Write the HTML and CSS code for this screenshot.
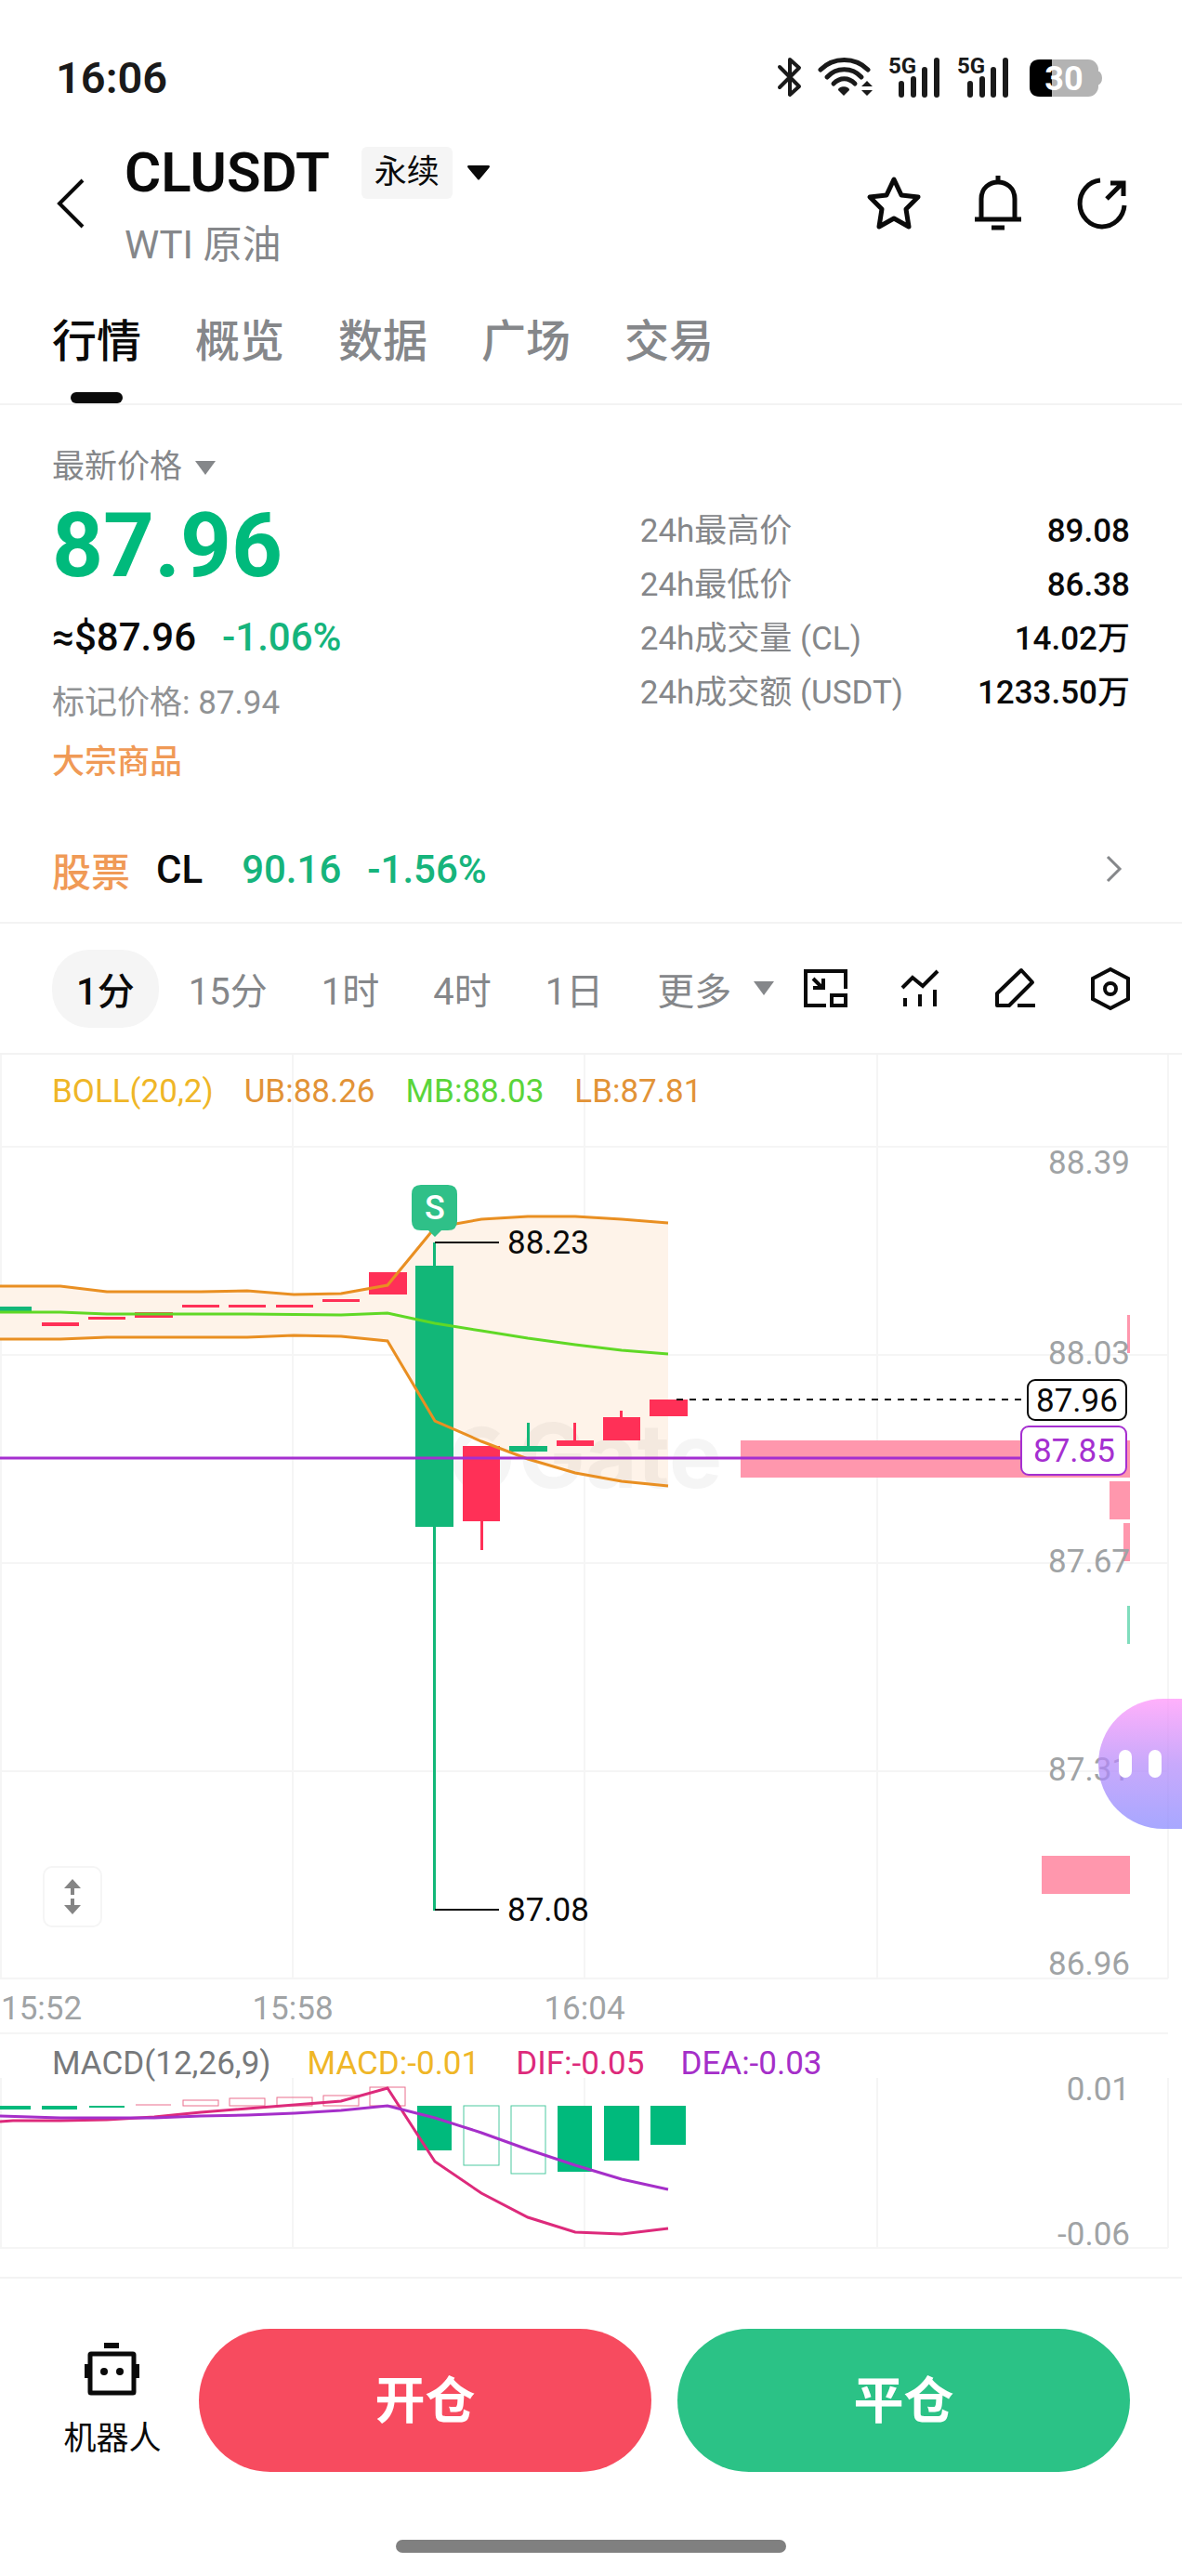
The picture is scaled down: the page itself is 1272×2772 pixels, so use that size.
FILE: index.html
```
<!DOCTYPE html>
<html lang="zh-CN">
<head>
    <meta charset="UTF-8">
    <meta name="viewport" content="width=device-width, initial-scale=1.0">
    <title>CLUSDT 永续</title>
    <link rel="stylesheet" href="styles.css">
</head>
<body>
    <!-- status bar -->
    <div class="status">
        <span class="clock">16:06</span>
        <div class="status-icons">
            <svg width="28" height="44" viewBox="0 0 28 44" fill="none" stroke="#1a1a1a" stroke-width="4" stroke-linejoin="round" stroke-linecap="round">
                <path d="M3 11 L24 32 L14 41 V3 L24 12 L3 33"/>
            </svg>
            <svg width="60" height="44" viewBox="0 0 60 44" fill="none" stroke="#1a1a1a" stroke-width="5" stroke-linecap="round">
                <path d="M3 14 C17 0 40 0 54 14"/>
                <path d="M10 22 C20 11 37 11 47 22"/>
                <path d="M17 29 C24 22 33 22 40 29"/>
                <path d="M28 42 L22 36 C22 31 34 31 34 36 Z" fill="#1a1a1a" stroke="none"/>
                <path d="M53 26 L59 32 H47 Z M53 42 L47 36 H59 Z" fill="#1a1a1a" stroke="none"/>
            </svg>
            <svg width="58" height="60" viewBox="0 -8 58 60">
                <text class="net" x="0" y="18">5G</text>
                <path d="M14 29 V41 M27 24 V41 M39 14 V41 M52 4 V41" stroke="#1a1a1a" stroke-width="6" stroke-linecap="round"/>
            </svg>
            <svg width="58" height="60" viewBox="0 -8 58 60">
                <text class="net" x="0" y="18">5G</text>
                <path d="M14 29 V41 M27 24 V41 M39 14 V41 M52 4 V41" stroke="#1a1a1a" stroke-width="6" stroke-linecap="round"/>
            </svg>
            <svg class="battery" width="78" height="44" viewBox="0 0 78 44">
                <rect x="0" y="3" width="74" height="40" rx="11" fill="#b3b3b3"/>
                <path d="M73 15 Q78 17 78 23 Q78 29 73 31 Z" fill="#b3b3b3"/>
                <path d="M24 3 H11 Q0 3 0 14 V32 Q0 43 11 43 H24 Z" fill="#000"/>
                <text class="level" x="37" y="36" text-anchor="middle">30</text>
            </svg>
        </div>
    </div>

    <header class="header">
        <button class="back" aria-label="返回">
            <svg width="32" height="56" viewBox="0 0 32 56" fill="none" stroke="#0a0a0a" stroke-width="4"><path d="M29 3 L4 28 L29 53"/></svg>
        </button>
        <div class="pair">
            <div class="pair-row">
                <h1>CLUSDT</h1>
                <span class="badge">永续</span>
                <svg width="24" height="16" viewBox="0 0 24 16"><path d="M1 0 H23 Q25 1 23 3 L13 15 Q12 16 11 15 L1 3 Q-1 1 1 0 Z" fill="#0a0a0a"/></svg>
            </div>
            <p class="sub">WTI 原油</p>
        </div>
        <div class="actions">
            <button aria-label="收藏">
                <svg width="60" height="60" viewBox="0 0 60 60" fill="none" stroke="#0a0a0a" stroke-width="5" stroke-linejoin="round"><path d="M30 4 L38 21 L56 23 L43 36 L46 55 L30 46 L14 55 L17 36 L4 23 L22 21 Z"/></svg>
            </button>
            <button aria-label="提醒">
                <svg width="60" height="60" viewBox="0 0 60 60" fill="none" stroke="#0a0a0a" stroke-width="5"><path d="M5 47 H55 M12 47 V25 C12 1 48 1 48 25 V47 M30 0 V7 M23 56 H37"/></svg>
            </button>
            <button aria-label="分享">
                <svg width="60" height="60" viewBox="0 0 60 60" fill="none" stroke="#0a0a0a" stroke-width="5"><path d="M28 5 A24 25 0 1 0 54 32 M35 25 L52 8 M39 8 H53 V22"/></svg>
            </button>
        </div>
    </header>

    <nav class="tabs">
        <a href="#" class="tab active">行情</a>
        <a href="#" class="tab">概览</a>
        <a href="#" class="tab">数据</a>
        <a href="#" class="tab">广场</a>
        <a href="#" class="tab">交易</a>
    </nav>

    <section class="quote">
        <div class="price">
            <button class="price-type">最新价格
                <svg width="22" height="15" viewBox="0 0 22 15"><path d="M0 0 H22 L11 15 Z" fill="#85878a"/></svg>
            </button>
            <div class="last">87.96</div>
            <div class="fiat"><span>≈$87.96</span><span class="green">-1.06%</span></div>
            <div class="mark">标记价格: 87.94</div>
            <div class="tag">大宗商品</div>
        </div>
        <dl class="stats">
            <div><dt>24h最高价</dt><dd>89.08</dd></div>
            <div><dt>24h最低价</dt><dd>86.38</dd></div>
            <div><dt>24h成交量 (CL)</dt><dd>14.02万</dd></div>
            <div><dt>24h成交额 (USDT)</dt><dd>1233.50万</dd></div>
        </dl>
    </section>

    <a href="#" class="stock">
        <span class="stock-tag">股票</span>
        <span class="stock-name">CL</span>
        <span class="green stock-price">90.16</span>
        <span class="green">-1.56%</span>
        <svg class="chevron" width="26" height="30" viewBox="0 0 26 30" fill="none" stroke="#85878a" stroke-width="3"><path d="M2 2 L15 15 L2 28"/></svg>
    </a>

    <div class="toolbar">
        <div class="periods">
            <button class="active">1分</button>
            <button>15分</button>
            <button>1时</button>
            <button>4时</button>
            <button>1日</button>
            <button class="more">更多
                <svg width="22" height="15" viewBox="0 0 22 15"><path d="M0 0 H22 L11 15 Z" fill="#85878a"/></svg>
            </button>
        </div>
        <div class="tools">
            <button aria-label="小窗">
                <svg width="48" height="48" viewBox="0 0 48 48" fill="none" stroke="#0a0a0a" stroke-width="4"><path d="M25 42 H3 V5 H46 V24 M11 13 L20 22 M11 23 H22 V13"/><rect x="31" y="31" width="15" height="11"/></svg>
            </button>
            <button aria-label="指标">
                <svg width="48" height="48" viewBox="0 0 48 48" fill="none" stroke="#0a0a0a" stroke-width="4"><path d="M5 23 L16 12 L27 21 L43 5 M8 34 V43 M24 30 V43 M40 25 V43"/></svg>
            </button>
            <button aria-label="画线">
                <svg width="48" height="48" viewBox="0 0 48 48" fill="none" stroke="#0a0a0a" stroke-width="4" stroke-linejoin="round"><path d="M5 42 V29 L31 4 L43 17 L18 42 Z M27 42 H46"/></svg>
            </button>
            <button aria-label="设置">
                <svg width="48" height="48" viewBox="0 0 48 48" fill="none" stroke="#0a0a0a" stroke-width="4"><path d="M25 3 L44 13 V35 L25 45 L6 35 V13 Z"/><circle cx="25" cy="24" r="6"/></svg>
            </button>
        </div>
    </div>

    <!-- candles -->
    <div class="chart">
        <svg class="plot" viewBox="0 0 1272 1054">
            <path class="grid" d="M1 0 V994 M315 0 V994 M629 0 V994 M944 0 V994 M1257 0 V994 M0 99 H1257 M0 323 H1257 M0 547 H1257 M0 771 H1257 M0 994 H1257 M0 1053 H1257"/>

            <path class="band" d="M0 249 L65 249 L115 255 L266 254 L316 258 L367 257 L417 248 L468 186 L518 177 L568 174 L619 174 L669 177 L719 181 V464 L669 459 L619 450 L568 435 L518 416 L468 394 L417 308 L367 303 L316 302 L266 304 L115 304 L65 306 L0 306 Z"/>

            <g class="watermark">
                <path d="M534 412 A26 29 0 1 0 544 437 H520 V426"/>
                <text x="558" y="466">Gate</text>
            </g>

            <g fill="#ff97ad">
                <rect x="1213" y="280" width="3" height="41"/>
                <rect x="797" y="415" width="419" height="40"/>
                <rect x="1194" y="459" width="22" height="41"/>
                <rect x="1209" y="504" width="7" height="41"/>
                <rect x="1121" y="862" width="95" height="41"/>
            </g>
            <rect x="1213" y="593" width="3" height="41" fill="#80ddbd"/>

            <g class="up">
                <rect x="45" y="288" width="40" height="4"/>
                <rect x="95" y="282" width="40" height="3"/>
                <rect x="145" y="277" width="41" height="6"/>
                <rect x="196" y="269" width="40" height="3"/>
                <rect x="246" y="269" width="40" height="3"/>
                <rect x="297" y="269" width="40" height="3"/>
                <rect x="347" y="263" width="40" height="3"/>
                <rect x="397" y="234" width="41" height="24"/>
                <rect x="498" y="421" width="40" height="81"/>
                <rect x="517" y="502" width="3" height="31"/>
                <rect x="599" y="415" width="40" height="6"/>
                <rect x="617" y="396" width="3" height="19"/>
                <rect x="649" y="390" width="40" height="25"/>
                <rect x="667" y="383" width="3" height="7"/>
                <rect x="699" y="371" width="41" height="18"/>
            </g>
            <g class="down">
                <rect x="0" y="271" width="34" height="5"/>
                <rect x="447" y="227" width="41" height="281"/>
                <rect x="466" y="202" width="3" height="719"/>
                <rect x="548" y="421" width="41" height="6"/>
                <rect x="567" y="396" width="3" height="25"/>
            </g>

            <g fill="none" stroke-width="3">
                <path stroke="#e98f22" d="M0 249 L65 249 L115 255 L216 255 L266 254 L316 258 L367 257 L417 248 L468 186 L518 177 L568 174 L619 174 L669 177 L719 181"/>
                <path stroke="#e98f22" d="M0 306 L65 306 L115 304 L266 304 L316 302 L367 303 L417 308 L468 394 L518 416 L568 435 L619 450 L669 459 L719 464"/>
                <path stroke="#60d826" d="M0 277 L65 277 L115 279 L266 279 L367 280 L417 278 L468 289 L518 297 L568 305 L619 312 L669 318 L719 322"/>
            </g>

            <path d="M0 434 H1100" stroke="#a52fd0" stroke-width="3"/>
            <path d="M728 371 H1100" stroke="#0a0a0a" stroke-width="2" stroke-dasharray="7 7"/>
            <path d="M468 202 H537 M468 920 H537" stroke="#0a0a0a" stroke-width="2"/>
            <text class="peak" x="546" y="214">88.23</text>
            <text class="peak" x="546" y="932">87.08</text>

            <path d="M453 140 H482 Q492 140 492 150 V179 Q492 189 482 189 H475 L468 196 L461 189 H453 Q443 189 443 179 V150 Q443 140 453 140 Z" fill="#2fc088"/>
            <text class="sell" x="468" y="177" text-anchor="middle">S</text>

            <g class="axis" text-anchor="end">
                <text x="1216" y="128">88.39</text>
                <text x="1216" y="333">88.03</text>
                <text x="1216" y="557">87.67</text>
                <text x="1216" y="781">87.31</text>
                <text x="1216" y="990">86.96</text>
            </g>
            <g class="axis">
                <text x="1" y="1038">15:52</text>
                <text x="315" y="1038" text-anchor="middle">15:58</text>
                <text x="629" y="1038" text-anchor="middle">16:04</text>
            </g>

            <rect x="1106" y="350" width="106" height="43" rx="8" fill="#fff" stroke="#0a0a0a" stroke-width="2"/>
            <text class="peak" x="1159" y="384" text-anchor="middle">87.96</text>
            <rect x="1099" y="400" width="113" height="52" rx="8" fill="#fff" stroke="#a52fd0" stroke-width="2"/>
            <text class="entry" x="1156" y="438" text-anchor="middle">87.85</text>
        </svg>
        <div class="legend">
            <span class="c-yellow">BOLL(20,2)</span>
            <span class="c-orange">UB:88.26</span>
            <span class="c-lime">MB:88.03</span>
            <span class="c-orange">LB:87.81</span>
        </div>
        <button class="scale" aria-label="缩放">
            <svg width="20" height="40" viewBox="0 0 20 40" fill="#858585"><path d="M10 1 L19 11 H12 V18 H8 V11 H1 Z M10 39 L1 29 H8 V22 H12 V29 H19 Z"/></svg>
        </button>
        <button class="assistant" aria-label="助手"><i></i><i></i></button>
    </div>

    <!-- macd -->
    <div class="chart">
        <svg class="plot" viewBox="0 0 1272 240">
            <path class="grid" d="M1 47 V230 M315 47 V230 M629 47 V230 M944 47 V230 M1257 47 V230 M0 230 H1257"/>
            <g fill="#00ba7c">
                <rect x="0" y="77" width="33" height="4"/>
                <rect x="45" y="77" width="38" height="4"/>
                <rect x="96" y="77" width="38" height="2"/>
                <rect x="449" y="77" width="37" height="48"/>
                <rect x="600" y="77" width="37" height="71"/>
                <rect x="650" y="77" width="38" height="59"/>
                <rect x="700" y="77" width="38" height="42"/>
            </g>
            <g fill="none" stroke="#4cc9a0">
                <rect x="499" y="77" width="38" height="64"/>
                <rect x="550" y="77" width="37" height="73"/>
            </g>
            <g fill="none" stroke="#ea6f8d">
                <path d="M146 76 H184"/>
                <rect x="197" y="71" width="38" height="6"/>
                <rect x="247" y="69" width="38" height="8"/>
                <rect x="298" y="68" width="38" height="9"/>
                <rect x="348" y="66" width="38" height="11"/>
                <rect x="398" y="57" width="38" height="20"/>
            </g>
            <g fill="none" stroke-width="3">
                <path stroke="#dd2a7b" d="M0 94 L14 93 L65 93 L115 92 L166 89 L216 84 L266 80 L317 76 L367 72 L417 58 L468 137 L518 171 L568 197 L619 213 L669 215 L719 209"/>
                <path stroke="#a52fc9" d="M0 88 L65 90 L166 90 L216 88 L266 87 L317 85 L367 82 L417 77 L468 90 L518 106 L568 124 L619 141 L669 156 L719 167"/>
            </g>
            <g class="axis" text-anchor="end">
                <text x="1216" y="71">0.01</text>
                <text x="1216" y="227">-0.06</text>
            </g>
        </svg>
        <div class="legend macd-legend">
            <span class="c-gray">MACD(12,26,9)</span>
            <span class="c-yellow">MACD:-0.01</span>
            <span class="c-pink">DIF:-0.05</span>
            <span class="c-purple">DEA:-0.03</span>
        </div>
    </div>

    <footer class="footer">
        <button class="robot">
            <svg width="60" height="60" viewBox="0 0 60 60" fill="#0a0a0a"><path d="M21 2 H37 V8 H21 Z M0 25 H4 V40 H0 Z M55 25 H59 V40 H55 Z"/><rect x="6" y="14" width="47" height="42" rx="1" fill="none" stroke="#0a0a0a" stroke-width="5"/><circle cx="21" cy="33" r="4"/><circle cx="38" cy="33" r="4"/></svg>
            <span>机器人</span>
        </button>
        <button class="trade open">开仓</button>
        <button class="trade close">平仓</button>
    </footer>
    <div class="home"></div>
</body>
</html>
```
FILE: styles.css
```
*{
    box-sizing: border-box;
    margin: 0;
    padding: 0;
}
body{
    background: #fff;
    color: #0a0a0a;
    font-family: Roboto, "Noto Sans CJK SC", sans-serif;
    font-size: 35px;
}
button{
    border: none;
    background: none;
    font: inherit;
    color: inherit;
    cursor: pointer;
}
a{
    color: inherit;
    text-decoration: none;
}
svg{
    display: block;
}
.green{
    color: #16b47c;
}

/* status bar */
.status{
    display: flex;
    justify-content: space-between;
    align-items: center;
    height: 150px;
    padding: 16px 86px 0 60px;
}
.clock{
    font-size: 47px;
    font-weight: 600;
    color: #1a1a1a;
}
.status-icons{
    display: flex;
    align-items: center;
    gap: 16px;
}
.battery{
    margin-left: 4px;
}
.net{
    font-size: 24px;
    font-weight: 700;
    fill: #1a1a1a;
}
.level{
    font-size: 36px;
    font-weight: 700;
    fill: #fff;
}

/* header */
.header{
    display: flex;
    align-items: center;
    padding: 6px 56px 0;
}
.back{
    width: 78px;
    padding-left: 4px;
}
.pair{
    flex: 1;
}
.pair-row{
    display: flex;
    align-items: center;
}
.pair-row h1{
    font-size: 60px;
    line-height: 60px;
    font-weight: 600;
}
.badge{
    margin: 0 16px 0 34px;
    padding: 0 14px;
    line-height: 56px;
    border-radius: 6px;
    background: #f5f5f5;
}
.sub{
    margin-top: 30px;
    font-size: 42px;
    line-height: 36px;
    color: #85878a;
}
.actions{
    display: flex;
    gap: 52px;
}

/* tabs */
.tabs{
    display: flex;
    gap: 58px;
    padding: 56px 56px 0;
    border-bottom: 2px solid #f3f3f3;
    font-size: 48px;
    line-height: 60px;
    font-weight: 500;
    color: #85878a;
}
.tab::after{
    content: "";
    display: block;
    width: 56px;
    height: 12px;
    margin: 24px auto 0;
    border-radius: 6px;
}
.tab.active{
    color: #0a0a0a;
}
.tab.active::after{
    background: #0a0a0a;
}

/* quote */
.quote{
    display: grid;
    grid-template-columns: 6fr 5fr;
    padding: 42px 56px 0;
    line-height: 50px;
}
.price-type{
    display: flex;
    align-items: center;
    gap: 14px;
    color: #85878a;
    line-height: 50px;
}
.last{
    margin-top: 9px;
    font-size: 96px;
    line-height: 100px;
    font-weight: 700;
    color: #00ba7c;
}
.fiat{
    display: flex;
    gap: 28px;
    margin-top: 24px;
    font-size: 42px;
    font-weight: 500;
}
.mark{
    margin-top: 21px;
    color: #909294;
}
.tag{
    margin-top: 14px;
    color: #f09a56;
    font-weight: 500;
}
.stats{
    padding-top: 65px;
}
.stats div{
    display: flex;
    justify-content: space-between;
    line-height: 58px;
}
.stats dt{
    color: #85878a;
}
.stats dd{
    font-weight: 500;
}
.stock{
    display: flex;
    align-items: center;
    height: 148px;
    padding: 32px 56px 0;
    border-bottom: 2px solid #f3f3f3;
    font-size: 42px;
    font-weight: 500;
}
.stock-tag{
    color: #f09a56;
}
.stock-name{
    margin: 0 42px 0 28px;
}
.stock-price{
    margin-right: 28px;
}
.chevron{
    margin-left: auto;
}

/* toolbar */
.toolbar{
    display: flex;
    align-items: center;
    justify-content: space-between;
    height: 141px;
    padding: 0 54px 0 56px;
    border-bottom: 2px solid #f3f3f3;
}
.periods{
    display: flex;
    gap: 6px;
    font-size: 40px;
    color: #85878a;
}
.periods button{
    height: 84px;
    padding: 0 26px;
    border-radius: 40px;
}
.periods .active{
    background: #f5f5f5;
    color: #0a0a0a;
    font-weight: 500;
}
.periods .more{
    display: flex;
    align-items: center;
    gap: 24px;
    padding-right: 0;
}
.tools{
    display: flex;
    gap: 54px;
}

/* charts: plot and legend share one cell */
.chart{
    display: grid;
    position: relative;
}
.plot, .legend{
    grid-area: 1 / 1;
}
.plot{
    width: 100%;
    height: auto;
}
.plot text{
    font-size: 35px;
}
.grid{
    fill: none;
    stroke: #f5f5f5;
    stroke-width: 2;
}
.band{
    fill: #fef3e9;
}
.watermark{
    opacity: 0.035;
}
.watermark path{
    fill: none;
    stroke: #000;
    stroke-width: 12;
}
.plot .watermark text{
    font-family: Inter, sans-serif;
    font-size: 96px;
    font-weight: 700;
}
.up{
    fill: #ff3057;
}
.down{
    fill: #12b778;
}
.axis{
    fill: #a0a3a5;
}
.peak{
    fill: #0a0a0a;
}
.entry{
    fill: #a52fd0;
}
.plot .sell{
    fill: #fff;
    font-size: 36px;
    font-weight: 500;
}
.legend{
    display: flex;
    align-self: start;
    gap: 33px;
    margin-top: 20px;
    padding: 0 56px;
    line-height: 40px;
    z-index: 1;
}
.macd-legend{
    gap: 39px;
    margin-top: 12px;
}
.c-yellow{ color: #efb627; }
.c-orange{ color: #e29337; }
.c-lime{ color: #5ad53a; }
.c-gray{ color: #77797b; }
.c-pink{ color: #dd2a7b; }
.c-purple{ color: #a52fc9; }
.scale{
    position: absolute;
    left: 46px;
    top: 873px;
    display: grid;
    place-items: center;
    width: 64px;
    height: 66px;
    border: 2px solid #f5f5f5;
    border-radius: 10px;
    background: #fff;
}
.assistant{
    position: absolute;
    right: 0;
    top: 693px;
    display: flex;
    justify-content: center;
    align-items: center;
    gap: 18px;
    width: 90px;
    height: 140px;
    border-radius: 70px 0 0 70px;
    background: linear-gradient(rgba(255, 150, 250, 0.75), rgba(180, 136, 250, 0.72) 50%, rgba(138, 138, 255, 0.75));
}
.assistant i{
    width: 14px;
    height: 30px;
    border-radius: 7px;
    background: #fff;
}

/* bottom bar */
.footer{
    display: flex;
    gap: 28px;
    margin-top: 21px;
    padding: 54px 56px 0;
    border-top: 2px solid #f3f3f3;
}
.robot{
    display: flex;
    flex-direction: column;
    align-items: center;
    justify-content: center;
    gap: 22px;
    width: 130px;
    padding-top: 2px;
    line-height: 48px;
}
.trade{
    flex: 1;
    height: 154px;
    padding-bottom: 8px;
    border-radius: 77px;
    font-size: 54px;
    font-weight: 700;
    color: #fff;
}
.open{
    background: #f74b5f;
}
.close{
    background: #2bc286;
}
.home{
    width: 33%;
    height: 14px;
    margin: 73px auto 25px;
    border-radius: 7px;
    background: #808080;
}
```
